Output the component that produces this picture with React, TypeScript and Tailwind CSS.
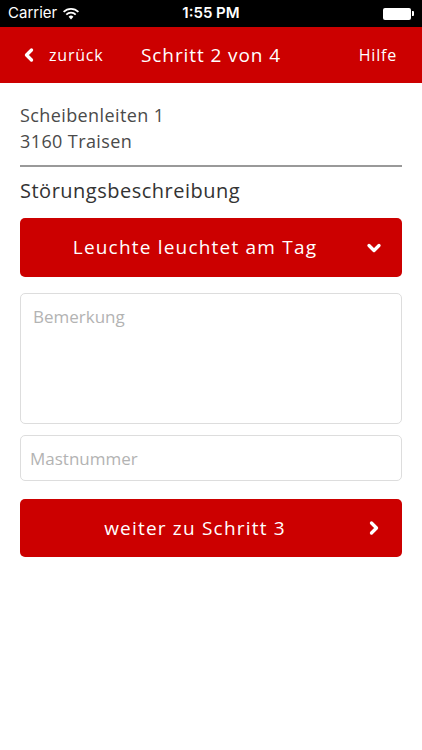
import { ChevronLeft, ChevronDown, ChevronRight } from 'lucide-react';

const font = { fontFamily: '"Open Sans", "Noto Sans", sans-serif' };

function StatusBar() {
  return (
    <div className="h-[27px] bg-black text-white flex items-center justify-between px-[8px] relative" style={{ fontFamily: 'Inter, "Liberation Sans", sans-serif' }}>
      <div className="flex items-center gap-[5px] text-[15px]">
        <span>Carrier</span>
        <svg width="18" height="13" viewBox="0 0 18 13">
          <path d="M9 12.5 L6.6 9.8 A3.4 3.4 0 0 1 11.4 9.8 Z" fill="white" />
          <path d="M4.3 7.6 A6.6 6.6 0 0 1 13.7 7.6" stroke="white" strokeWidth="1.8" fill="none" />
          <path d="M1.6 4.9 A10.4 10.4 0 0 1 16.4 4.9" stroke="white" strokeWidth="1.8" fill="none" />
        </svg>
      </div>
      <span className="absolute left-1/2 -translate-x-1/2 text-[15px] font-semibold">1:55 PM</span>
      <div className="flex items-center">
        <div className="w-[28px] h-[12px] bg-white rounded-[2px]" />
        <div className="w-[2px] h-[5px] bg-white rounded-r-[1px] ml-[1px]" />
      </div>
    </div>
  );
}

function NavBar() {
  return (
    <div className="h-[56px] bg-[#cc0000] text-white flex items-center justify-between relative pl-[19px] pr-[25px]" style={font}>
      <div className="flex items-center gap-[10px]">
        <ChevronLeft size={20} strokeWidth={4} />
        <span className="text-[16px] font-medium tracking-[0.8px]">zurück</span>
      </div>
      <span className="absolute left-1/2 -translate-x-1/2 text-[19px] tracking-[0.9px]">Schritt 2 von 4</span>
      <span className="text-[16px] font-medium tracking-[0.8px]">Hilfe</span>
    </div>
  );
}

export default function App() {
  return (
    <div className="w-[422px] h-[750px] bg-white overflow-hidden" style={font}>
      <StatusBar />
      <NavBar />
      <div className="px-[20px] pt-[19px]">
        <div className="text-[18px] leading-[26px] text-[#4a4a4a] tracking-[0.4px] pb-[11px] border-b-2 border-[#999999]">
          <div>Scheibenleiten 1</div>
          <div>3160 Traisen</div>
        </div>
        <div className="mt-[10px] text-[20px] leading-[28px] text-[#333333] tracking-[0.5px]">Störungsbeschreibung</div>
        <button className="mt-[13px] w-full h-[59px] rounded-[5px] bg-[#cc0000] text-white flex items-center relative pr-[32px]">
          <span className="w-full text-center text-[19px] tracking-[1.2px]">Leuchte leuchtet am Tag</span>
          <ChevronDown size={20} strokeWidth={4} className="absolute right-[18px]" />
        </button>
        <textarea
          placeholder="Bemerkung"
          className="mt-[16px] w-full h-[131px] border border-[#dddddd] rounded-[5px] px-[12px] py-[10px] text-[17px] placeholder:text-[#b3b3b3] resize-none outline-none block"
        />
        <input
          placeholder="Mastnummer"
          className="mt-[11px] w-full h-[46px] border border-[#dddddd] rounded-[5px] px-[9px] text-[17px] placeholder:text-[#b3b3b3] outline-none block"
        />
        <button className="mt-[18px] w-full h-[58px] rounded-[5px] bg-[#cc0000] text-white flex items-center relative pr-[32px]">
          <span className="w-full text-center text-[19px] tracking-[1.2px]">weiter zu Schritt 3</span>
          <ChevronRight size={20} strokeWidth={4} className="absolute right-[18px]" />
        </button>
      </div>
    </div>
  );
}
